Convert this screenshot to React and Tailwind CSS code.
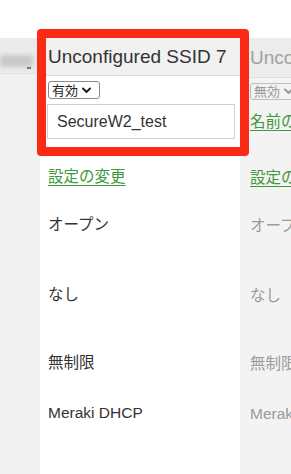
import React from "react";

const Chevron = ({ color = "#222" }) => (
  <svg width="9" height="7" viewBox="0 0 9 7" className="ml-[4px]">
    <path d="M1 1.5 L4.5 5 L8 1.5" fill="none" stroke={color} strokeWidth="2" strokeLinecap="round" strokeLinejoin="round" />
  </svg>
);

export default function App() {
  const font = { fontFamily: '"Liberation Sans", "Noto Sans CJK JP", sans-serif' };
  return (
    <div className="relative w-[291px] h-[474px] overflow-hidden bg-white" style={font}>
      <div className="h-[38px] bg-white" />
      <div className="flex h-[436px]">
        {/* left column */}
        <div className="w-[40px] shrink-0 bg-[#f1f1f1] flex flex-col">
          <div className="h-[36px] bg-[#ebebeb] relative border-b border-[#e2e2e2]">
            <div className="absolute left-0 top-[17px] w-[33px] h-[12px] bg-[#c9c9c9] blur-[2px]" />
            <div className="absolute left-[27px] top-[29px] w-[4px] h-[2px] bg-[#777] blur-[0.5px]" />
          </div>
        </div>
        {/* center column */}
        <div className="w-[200px] shrink-0 bg-white flex flex-col pl-[8px] text-[#333] whitespace-nowrap">
          <div className="-ml-[8px] pl-[8px] h-[38px] bg-[#f1f1f1] border-b border-[#dcdcdc] flex items-end pb-[7px]">
            <span className="text-[19px] leading-[22px] text-[#333]">Unconfigured SSID 7</span>
          </div>
          <div className="mt-[5px] h-[18px] w-[52px] border border-[#8a8a8a] rounded-[3px] flex items-center pl-[3px] text-[13px] leading-none text-[#222]">
            有効<Chevron />
          </div>
          <div className="mt-[5px] h-[35px] w-[188px] -ml-[1px] border border-[#cfcfcf] flex items-center pl-[9px] text-[16px] text-[#333]">
            SecureW2_test
          </div>
          <div className="mt-[14px] h-[3px] w-[6px] bg-[#4a9a43]" />
          <div className="mt-[11px] h-[20px] text-[15.5px] leading-[20px] text-[#3f983a] underline underline-offset-[3px]">設定の変更</div>
          <div className="mt-[28px] h-[20px] text-[15.5px] leading-[20px]">オープン</div>
          <div className="mt-[50px] h-[20px] text-[15.5px] leading-[20px]">なし</div>
          <div className="mt-[48px] h-[20px] text-[15.5px] leading-[20px]">無制限</div>
          <div className="mt-[30px] h-[20px] text-[15.5px] leading-[20px]">Meraki DHCP</div>
        </div>
        {/* right column */}
        <div className="flex-1 min-w-0 bg-[#f3f3f3] flex flex-col pl-[10px] text-[#9a9a9a] whitespace-nowrap overflow-hidden">
          <div className="-ml-[10px] pl-[10px] h-[40px] bg-[#ececec] border-b border-[#dedede] flex items-end pb-[8px]">
            <span className="text-[19px] leading-[22px] text-[#a0a0a0]">Unconfigured SSID 8</span>
          </div>
          <div className="mt-[5px] h-[17px] w-[52px] border border-[#bdbdbd] rounded-[3px] flex items-center pl-[3px] text-[13px] leading-none text-[#999] shrink-0">
            無効<Chevron color="#999" />
          </div>
          <div className="mt-[12px] h-[20px] text-[15.5px] leading-[20px] text-[#3f983a] underline underline-offset-[3px]">名前の変更</div>
          <div className="mt-[36px] h-[20px] text-[15.5px] leading-[20px] text-[#3f983a] underline underline-offset-[3px]">設定の変更</div>
          <div className="mt-[28px] h-[20px] text-[15.5px] leading-[20px]">オープン</div>
          <div className="mt-[50px] h-[20px] text-[15.5px] leading-[20px]">なし</div>
          <div className="mt-[48px] h-[20px] text-[15.5px] leading-[20px]">無制限</div>
          <div className="mt-[30px] h-[20px] text-[15.5px] leading-[20px]">Meraki DHCP</div>
        </div>
      </div>
      {/* red highlight box */}
      <div className="absolute left-[37px] top-[29px] w-[212px] h-[127px] border-[9px] border-[#fb2a14] rounded-[4px]" />
    </div>
  );
}
